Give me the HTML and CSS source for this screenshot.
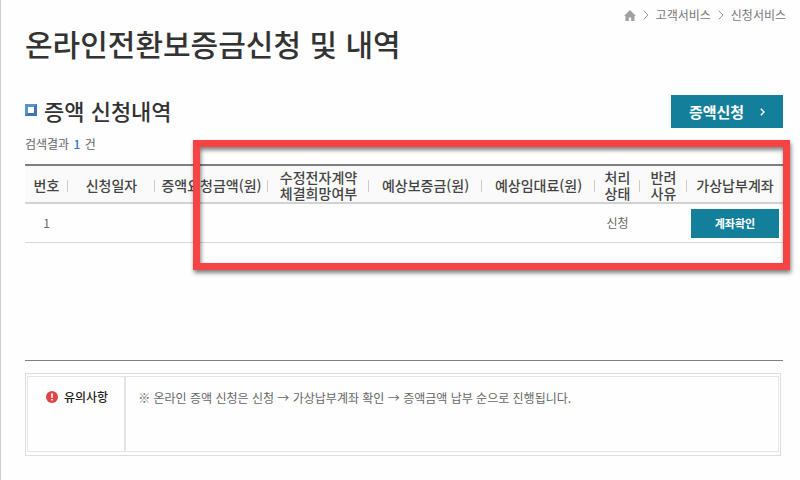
FILE: index.html
```
<!DOCTYPE html>
<html lang="ko">
<head>
  <meta charset="UTF-8">
  <title>온라인전환보증금신청 및 내역</title>
  <meta name="viewport" content="width=device-width, initial-scale=1.0">
  <link rel="stylesheet" href="styles.css">
</head>
<body>
  <header class="page-header">
    <nav class="breadcrumb">
      <a href="#" aria-label="홈">
        <svg class="home" viewBox="0 0 12 11" width="12" height="11"><path d="M6 0 12 6H10.5V11H7.2V7.5H4.8V11H1.5V6H0Z" fill="#a0a0a0"/></svg>
      </a>
      <svg class="arrow" viewBox="0 0 6 10" width="6" height="10"><path d="M.7.7 5 5 .7 9.3"/></svg>
      <a href="#">고객서비스</a>
      <svg class="arrow" viewBox="0 0 6 10" width="6" height="10"><path d="M.7.7 5 5 .7 9.3"/></svg>
      <a href="#">신청서비스</a>
    </nav>
    <h1>온라인전환보증금신청 및 내역</h1>
  </header>

  <main>
    <div class="section-head">
      <h2>증액 신청내역</h2>
      <button type="button" class="apply-button">
        증액신청
        <svg viewBox="0 0 5 8" width="5" height="8"><path d="M.8.8 4 4 .8 7.2" fill="none" stroke="#fff" stroke-width="1.4"/></svg>
      </button>
    </div>
    <p class="count">검색결과 <strong>1</strong> 건</p>

    <div class="list">
      <table>
        <colgroup>
          <col class="col-no">
          <col class="col-date">
          <col class="col-amount">
          <col class="col-contract">
          <col class="col-amount">
          <col class="col-amount">
          <col class="col-state">
          <col class="col-reason">
          <col class="col-account">
        </colgroup>
        <thead>
          <tr>
            <th scope="col">번호</th>
            <th scope="col">신청일자</th>
            <th scope="col">증액요청금액(원)</th>
            <th scope="col">수정전자계약<br>체결희망여부</th>
            <th scope="col">예상보증금(원)</th>
            <th scope="col">예상임대료(원)</th>
            <th scope="col">처리<br>상태</th>
            <th scope="col">반려<br>사유</th>
            <th scope="col">가상납부계좌</th>
          </tr>
        </thead>
        <tbody>
          <tr>
            <td>1</td>
            <td></td>
            <td></td>
            <td></td>
            <td></td>
            <td></td>
            <td>신청</td>
            <td></td>
            <td><button type="button" class="account-button">계좌확인</button></td>
          </tr>
        </tbody>
      </table>
      <div class="highlight"></div>
    </div>

    <section class="notice">
      <div class="notice-inner">
        <h3>
          <svg viewBox="0 0 12 12" width="12" height="12"><circle cx="6" cy="6" r="6" fill="#e04343"/><path d="M5 2.5H7L6.7 7H5.3ZM5.2 8H6.8V9.6H5.2Z" fill="#fff"/></svg>
          유의사항
        </h3>
        <p>※ 온라인 증액 신청은 신청 → 가상납부계좌 확인 → 증액금액 납부 순으로 진행됩니다.</p>
      </div>
    </section>
  </main>
</body>
</html>
```

FILE: styles.css
```
:root {
  --main-color: #147f9b;
  --highlight: #f64444;
  --font: "Noto Sans CJK KR", "Noto Sans", sans-serif;
}

*, *::before {
  box-sizing: border-box;
}

body {
  margin: 0;
  min-height: 100vh;
  border-left: 1px solid #ccc;
  background: #fefefe;
  font-family: var(--font);
  font-size: 12px;
  line-height: 16px;
  color: #666;
}

h1, h2, h3, p {
  margin: 0;
}

button {
  border: none;
  padding: 0;
  background: var(--main-color);
  color: #fff;
  font-family: var(--font);
  font-weight: bold;
  cursor: pointer;
}

/* header */
.page-header {
  padding: 7px 14px 0 24px;
}

.breadcrumb {
  display: flex;
  justify-content: flex-end;
  align-items: center;
  gap: 7px;
}

.breadcrumb a {
  color: #777;
  text-decoration: none;
}

.home {
  display: block;
}

.arrow {
  fill: none;
  stroke: #999;
}

h1 {
  font-size: 30px;
  line-height: 40px;
  font-weight: 500;
  color: #333;
}

main {
  padding: 32px 17px 24px 24px;
}

.section-head {
  display: flex;
  justify-content: space-between;
  align-items: center;
}

h2 {
  display: flex;
  align-items: center;
  gap: 7px;
  font-size: 22px;
  line-height: 28px;
  padding-bottom: 4px;
  font-weight: 500;
  color: #333;
}

h2::before {
  content: "";
  width: 12px;
  height: 12px;
  border: 3px solid;
  border-color: #5b93d0 #3f74b4 #3f74b4 #5b93d0;
}

.apply-button {
  display: flex;
  justify-content: center;
  align-items: center;
  gap: 16px;
  width: 112px;
  height: 33px;
  font-size: 15px;
}

.count {
  margin: 8px 0 12px;
}

.count strong {
  margin: 0 1px;
  color: #2f73c8;
  font-weight: 500;
}

/* list */
.list {
  position: relative;
  min-height: 197px;
  border-bottom: 1px solid #808080;
}

table {
  width: 100%;
  table-layout: fixed;
  border-collapse: separate;
  border-spacing: 0;
  border-top: 2px solid #7c807c;
  text-align: center;
}

.col-no { width: 43px; }
.col-date { width: 87px; }
.col-amount { width: 113px; }
.col-contract { width: 101px; }
.col-state { width: 45px; }
.col-reason { width: 47px; }
.col-account { width: 96px; }

th {
  height: 38px;
  padding: 2px 0 0;
  background: #fafafa;
  border-bottom: 2px solid #d0d3d3;
  font-size: 14px;
  line-height: 16px;
  font-weight: 500;
  color: #444;
  white-space: nowrap;
}

/* short divider between column titles */
th:not(:last-child) {
  background: linear-gradient(#ccc, #ccc) right 14px / 1px 12px no-repeat #fafafa;
}

td {
  height: 39px;
  padding: 0;
  border-bottom: 1px solid #d8d8d8;
}

.account-button {
  display: block;
  width: 88px;
  height: 29px;
  margin: 0 auto;
  font-size: 11px;
}

.highlight {
  position: absolute;
  top: -24px;
  left: 168px;
  right: -7px;
  height: 130px;
  border: 7px solid var(--highlight);
  filter: drop-shadow(1px 3px 2px rgba(0, 0, 0, 0.5));
  pointer-events: none;
}

/* notice */
.notice {
  margin: 12px 2px 0 0;
  padding: 2px 1px 3px;
  border: 1px solid #ddd;
}

.notice-inner {
  display: flex;
  min-height: 76px;
  border: 1px solid #e4e4e4;
}

h3 {
  display: flex;
  align-items: center;
  align-self: flex-start;
  gap: 6px;
  height: 74px;
  padding: 0 16px 34px 18px;
  border-right: 2px solid #e4e4e4;
  font-size: 12px;
  line-height: 16px;
  font-weight: 500;
  color: #222;
}

.notice p {
  padding: 13px 12px;
}
```
